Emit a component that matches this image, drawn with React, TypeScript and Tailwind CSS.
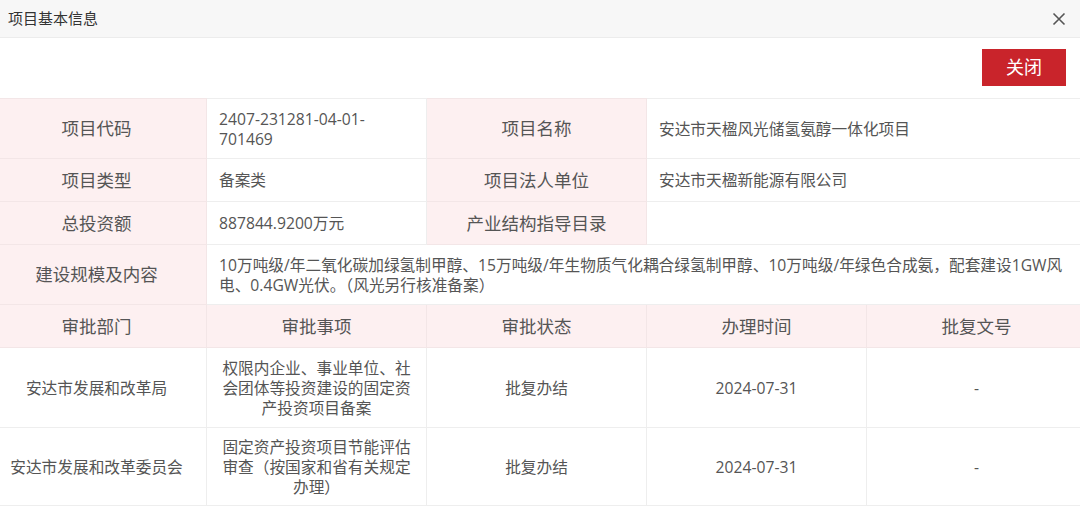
import React from 'react';

const font = { fontFamily: '"Open Sans", "Noto Sans CJK SC", "Microsoft YaHei", sans-serif' };

const labelCls = 'bg-[#fdf0f1] text-[#555] text-[17.5px] text-center align-middle border border-[#f3e6e7]';
const valueCls = 'bg-white text-[#555] text-[15.7px] leading-[20px] align-middle pl-[12px] pr-[12px] border border-[#eeeeee]';
const dataCls = 'text-center text-[15.7px] leading-[20px] text-[#555] border border-[#eeeeee]';

interface Approval {
  dept: string;
  item: string;
  status: string;
  date: string;
  doc: string;
}

const approvals: Approval[] = [
  {
    dept: '安达市发展和改革局',
    item: '权限内企业、事业单位、社会团体等投资建设的固定资产投资项目备案',
    status: '批复办结',
    date: '2024-07-31',
    doc: '-',
  },
  {
    dept: '安达市发展和改革委员会',
    item: '固定资产投资项目节能评估审查（按国家和省有关规定办理）',
    status: '批复办结',
    date: '2024-07-31',
    doc: '-',
  },
];

const App: React.FC = () => {
  return (
    <div className="w-[1080px] h-[510px] bg-white overflow-hidden" style={font}>
      <div className="h-[38px] bg-[#f7f7f7] border-b border-[#ececec] flex items-center justify-between pl-[8px] pr-[14px]">
        <span className="text-[15px] text-[#333]">项目基本信息</span>
        <svg width="14" height="14" viewBox="0 0 14 14" className="text-[#555]">
          <path d="M1.5 1.5 L12.5 12.5 M12.5 1.5 L1.5 12.5" stroke="currentColor" strokeWidth="1.6" fill="none" />
        </svg>
      </div>
      <div className="h-[60px] flex justify-end items-start pt-[11px] pr-[14px]">
        <button className="w-[84px] h-[37px] bg-[#c9242b] text-white text-[18px]">关闭</button>
      </div>
      {/* table is wider than the window and shifted left, as in the screenshot */}
      <table className="w-[1100px] ml-[-14px] table-fixed border-collapse">
        <colgroup>
          <col className="w-[220px]" />
          <col className="w-[220px]" />
          <col className="w-[220px]" />
          <col className="w-[220px]" />
          <col className="w-[220px]" />
        </colgroup>
        <tbody>
          <tr className="h-[60px]">
            <td className={labelCls}>项目代码</td>
            <td className={valueCls}>2407-231281-04-01-701469</td>
            <td className={labelCls}>项目名称</td>
            <td className={valueCls} colSpan={2}>安达市天楹风光储氢氨醇一体化项目</td>
          </tr>
          <tr className="h-[43px]">
            <td className={labelCls}>项目类型</td>
            <td className={valueCls}>备案类</td>
            <td className={labelCls}>项目法人单位</td>
            <td className={valueCls} colSpan={2}>安达市天楹新能源有限公司</td>
          </tr>
          <tr className="h-[43px]">
            <td className={labelCls}>总投资额</td>
            <td className={valueCls}>887844.9200万元</td>
            <td className={labelCls}>产业结构指导目录</td>
            <td className={valueCls} colSpan={2}></td>
          </tr>
          <tr className="h-[60px]">
            <td className={labelCls}>建设规模及内容</td>
            <td className={valueCls} colSpan={4}>
              10万吨级/年二氧化碳加绿氢制甲醇、15万吨级/年生物质气化耦合绿氢制甲醇、10万吨级/年绿色合成氨，配套建设1GW风电、0.4GW光伏。（风光另行核准备案）
            </td>
          </tr>
          <tr className="h-[43px]">
            {['审批部门', '审批事项', '审批状态', '办理时间', '批复文号'].map((h) => (
              <td key={h} className={labelCls}>{h}</td>
            ))}
          </tr>
          {approvals.map((a, i) => (
            <tr key={a.dept} className={i === 0 ? 'h-[80px]' : 'h-[78px]'}>
              <td className={dataCls}>{a.dept}</td>
              <td className={`${dataCls} px-[14px]`}>{a.item}</td>
              <td className={dataCls}>{a.status}</td>
              <td className={dataCls}>{a.date}</td>
              <td className={dataCls}>{a.doc}</td>
            </tr>
          ))}
        </tbody>
      </table>
    </div>
  );
};

export default App;
